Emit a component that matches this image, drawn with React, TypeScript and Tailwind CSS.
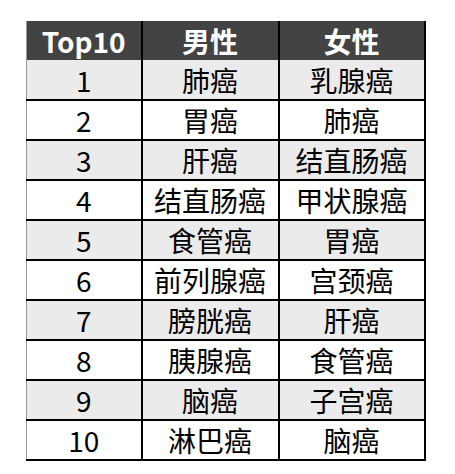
const rows: [string, string, string][] = [
  ["1", "肺癌", "乳腺癌"],
  ["2", "胃癌", "肺癌"],
  ["3", "肝癌", "结直肠癌"],
  ["4", "结直肠癌", "甲状腺癌"],
  ["5", "食管癌", "胃癌"],
  ["6", "前列腺癌", "宫颈癌"],
  ["7", "膀胱癌", "肝癌"],
  ["8", "胰腺癌", "食管癌"],
  ["9", "脑癌", "子宫癌"],
  ["10", "淋巴癌", "脑癌"],
];

export default function App() {
  return (
    <div className="h-[474px] w-[455px] bg-white pl-[26px] pt-[21px] font-['Noto_Sans_CJK_SC',sans-serif]">
      <table className="w-[398px] table-fixed border-collapse border-l-[1.5px] border-l-[#9a9a9a] text-[28px] leading-none">
        <colgroup>
          <col className="w-[115px]" />
          <col className="w-[137px]" />
          <col className="w-[146px]" />
        </colgroup>
        <thead>
          <tr className="h-[39px] bg-[#434343] font-bold text-white">
            <th className="border-r-2 border-black">Top10</th>
            <th className="border-r-2 border-black">男性</th>
            <th className="border-r-2 border-black">女性</th>
          </tr>
        </thead>
        <tbody>
          {rows.map(([n, m, f], i) => (
            <tr
              key={n}
              className={`h-[40px] border-b-2 border-black text-center text-black ${i % 2 === 0 ? "bg-[#ebebeb]" : "bg-white"}`}
            >
              <td className="border-r-2 border-black">{n}</td>
              <td className="border-r-2 border-black">{m}</td>
              <td className="border-r-2 border-black">{f}</td>
            </tr>
          ))}
        </tbody>
      </table>
    </div>
  );
}
